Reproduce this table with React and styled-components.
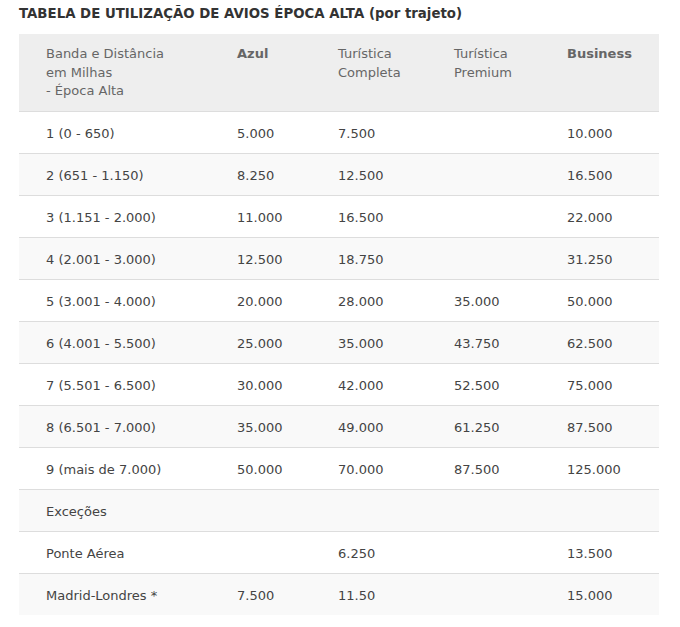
import React from 'react';
import styled, { createGlobalStyle } from 'styled-components';

const GlobalStyle = createGlobalStyle`
  body {
    margin: 0;
    background: #fff;
    font-family: "DejaVu Sans", Verdana, sans-serif;
  }
`;

const Page = styled.div`
  padding: 5px 21px 0 19px;
`;

const Title = styled.h4`
  margin: 0 0 11px;
  font-size: 13.33px;
  line-height: 18px;
  font-weight: bold;
  color: #333;
`;

const Table = styled.table`
  width: 640px;
  border-collapse: collapse;
  table-layout: fixed;
  font-size: 13px;
  line-height: 18px;
`;

const HeadCell = styled.th`
  background: #eee;
  color: #666;
  font-weight: ${props => (props.strong ? 'bold' : 'normal')};
  text-align: left;
  vertical-align: top;
  line-height: 18.5px;
  padding: 11px 8px 10px 27px;
  border-bottom: 1px solid #ddd;
`;

const Row = styled.tr`
  background: ${props => (props.shaded ? '#f9f9f9' : '#fff')};
  border-bottom: 1px solid ${props => (props.last ? 'transparent' : '#ddd')};
`;

const Cell = styled.td`
  color: #444;
  padding: 13px 8px 10px 27px;
  white-space: nowrap;
`;

const columns = [
  { width: 191, label: ['Banda e Distância', 'em Milhas', '- Época Alta'] },
  { width: 101, label: ['Azul'], strong: true },
  { width: 116, label: ['Turística', 'Completa'] },
  { width: 113, label: ['Turística', 'Premium'] },
  { width: 119, label: ['Business'], strong: true }
];

const rows = [
  ['1 (0 - 650)', '5.000', '7.500', '', '10.000'],
  ['2 (651 - 1.150)', '8.250', '12.500', '', '16.500'],
  ['3 (1.151 - 2.000)', '11.000', '16.500', '', '22.000'],
  ['4 (2.001 - 3.000)', '12.500', '18.750', '', '31.250'],
  ['5 (3.001 - 4.000)', '20.000', '28.000', '35.000', '50.000'],
  ['6 (4.001 - 5.500)', '25.000', '35.000', '43.750', '62.500'],
  ['7 (5.501 - 6.500)', '30.000', '42.000', '52.500', '75.000'],
  ['8 (6.501 - 7.000)', '35.000', '49.000', '61.250', '87.500'],
  ['9 (mais de 7.000)', '50.000', '70.000', '87.500', '125.000'],
  ['Exceções', '', '', '', ''],
  ['Ponte Aérea', '', '6.250', '', '13.500'],
  ['Madrid-Londres *', '7.500', '11.50', '', '15.000']
];

const App = () => (
  <Page>
    <GlobalStyle />
    <Title>TABELA DE UTILIZAÇÃO DE AVIOS ÉPOCA ALTA (por trajeto)</Title>
    <Table>
      <colgroup>
        {columns.map((col, i) => (
          <col key={i} style={{ width: col.width }} />
        ))}
      </colgroup>
      <thead>
        <tr>
          {columns.map((col, i) => (
            <HeadCell key={i} strong={col.strong}>
              {col.label.map((line, j) => (
                <React.Fragment key={j}>
                  {j > 0 && <br />}
                  {line}
                </React.Fragment>
              ))}
            </HeadCell>
          ))}
        </tr>
      </thead>
      <tbody>
        {rows.map((row, i) => (
          <Row key={i} shaded={i % 2 === 1} last={i === rows.length - 1}>
            {row.map((value, j) => (
              <Cell key={j}>{value}</Cell>
            ))}
          </Row>
        ))}
      </tbody>
    </Table>
  </Page>
);

export default App;
